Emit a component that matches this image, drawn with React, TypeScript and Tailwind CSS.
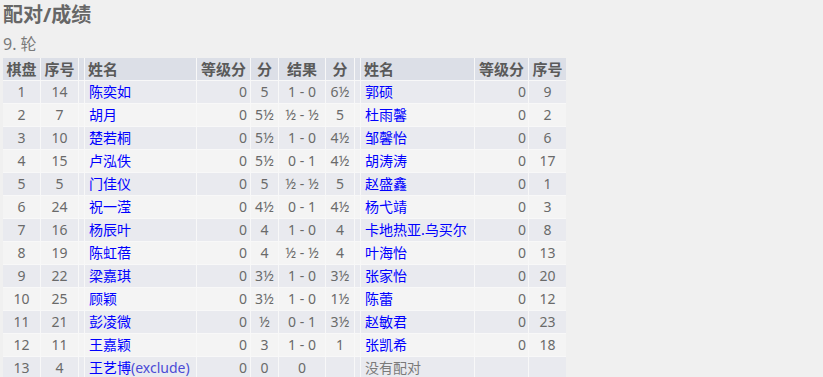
import React from "react";

type Row = [string, string, string, string, string, string, string, string, string, string];

const rows: Row[] = [
  ["1", "14", "陈奕如", "0", "5", "1 - 0", "6½", "郭硕", "0", "9"],
  ["2", "7", "胡月", "0", "5½", "½ - ½", "5", "杜雨馨", "0", "2"],
  ["3", "10", "楚若桐", "0", "5½", "1 - 0", "4½", "邹馨怡", "0", "6"],
  ["4", "15", "卢泓佚", "0", "5½", "0 - 1", "4½", "胡涛涛", "0", "17"],
  ["5", "5", "门佳仪", "0", "5", "½ - ½", "5", "赵盛鑫", "0", "1"],
  ["6", "24", "祝一滢", "0", "4½", "0 - 1", "4½", "杨弋靖", "0", "3"],
  ["7", "16", "杨辰叶", "0", "4", "1 - 0", "4", "卡地热亚.乌买尔", "0", "8"],
  ["8", "19", "陈虹蓓", "0", "4", "½ - ½", "4", "叶海怡", "0", "13"],
  ["9", "22", "梁嘉琪", "0", "3½", "1 - 0", "3½", "张家怡", "0", "20"],
  ["10", "25", "顾颖", "0", "3½", "1 - 0", "1½", "陈蕾", "0", "12"],
  ["11", "21", "彭凌微", "0", "½", "0 - 1", "3½", "赵敏君", "0", "23"],
  ["12", "11", "王嘉颖", "0", "3", "1 - 0", "1", "张凯希", "0", "18"],
];

const FONT = '"Noto Sans", "Noto Sans CJK SC", sans-serif';

export default function App() {
  const hdr = "bg-[#dcdfe7] h-[22px] leading-[22px] text-[15px] font-bold text-[#5a5a5a] whitespace-nowrap overflow-hidden";
  return (
    <div className="w-[823px] h-[377px] bg-[#f0f0f0] pl-[3px] overflow-hidden" style={{ fontFamily: FONT }}>
      <div className="pt-[2px] h-[28px] leading-[26px] text-[20px] font-bold text-[#676767]">配对/成绩</div>
      <div className="mt-[5px] leading-[22px] text-[16px] text-[#7a7a7a]">9. 轮</div>
      <div className="mt-[3px] inline-grid grid-cols-[37px_37px_5px_111px_53px_27px_46px_28px_5px_113px_53px_37px] gap-px bg-[#f8f8f8] text-[14px] text-[#6a6a6a]">
        <div className={`${hdr} text-center`}>棋盘</div>
        <div className={`${hdr} text-center`}>序号</div>
        <div className={hdr}></div>
        <div className={`${hdr} pl-[3px]`}>姓名</div>
        <div className={`${hdr} text-center`}>等级分</div>
        <div className={`${hdr} text-center`}>分</div>
        <div className={`${hdr} text-center`}>结果</div>
        <div className={`${hdr} text-center`}>分</div>
        <div className={hdr}></div>
        <div className={`${hdr} pl-[3px]`}>姓名</div>
        <div className={`${hdr} text-center`}>等级分</div>
        <div className={`${hdr} text-center`}>序号</div>
        {rows.map((r, i) => {
          const bg = i % 2 === 0 ? "bg-[#e9eaef]" : "bg-[#f4f4f4]";
          const c = `${bg} h-[22px] leading-[22px] whitespace-nowrap overflow-hidden`;
          return (
            <React.Fragment key={i}>
              <div className={`${c} text-center`}>{r[0]}</div>
              <div className={`${c} text-center`}>{r[1]}</div>
              <div className={c}></div>
              <div className={`${c} pl-[4px] text-[#0000ff]`}>{r[2]}</div>
              <div className={`${c} text-right pr-[3px]`}>{r[3]}</div>
              <div className={`${c} text-center`}>{r[4]}</div>
              <div className={`${c} text-center`}>{r[5]}</div>
              <div className={`${c} text-center`}>{r[6]}</div>
              <div className={c}></div>
              <div className={`${c} pl-[4px] text-[#0000ff]`}>{r[7]}</div>
              <div className={`${c} text-right pr-[2px]`}>{r[8]}</div>
              <div className={`${c} text-center`}>{r[9]}</div>
            </React.Fragment>
          );
        })}
        {(() => {
          const c = "bg-[#e9eaef] h-[22px] leading-[22px] whitespace-nowrap overflow-visible";
          return (
            <>
              <div className={`${c} text-center`}>13</div>
              <div className={`${c} text-center`}>4</div>
              <div className={c}></div>
              <div className={`${c} pl-[4px] text-[#0000ff]`}>
                王艺博<span className="text-[#4b4bd6]">(exclude)</span>
              </div>
              <div className={`${c} text-right pr-[3px]`}>0</div>
              <div className={`${c} text-center`}>0</div>
              <div className={`${c} text-center`}>0</div>
              <div className={c}></div>
              <div className={c}></div>
              <div className={`${c} pl-[4px] text-[#7a7a7a]`}>没有配对</div>
              <div className={c}></div>
              <div className={c}></div>
            </>
          );
        })()}
      </div>
    </div>
  );
}
